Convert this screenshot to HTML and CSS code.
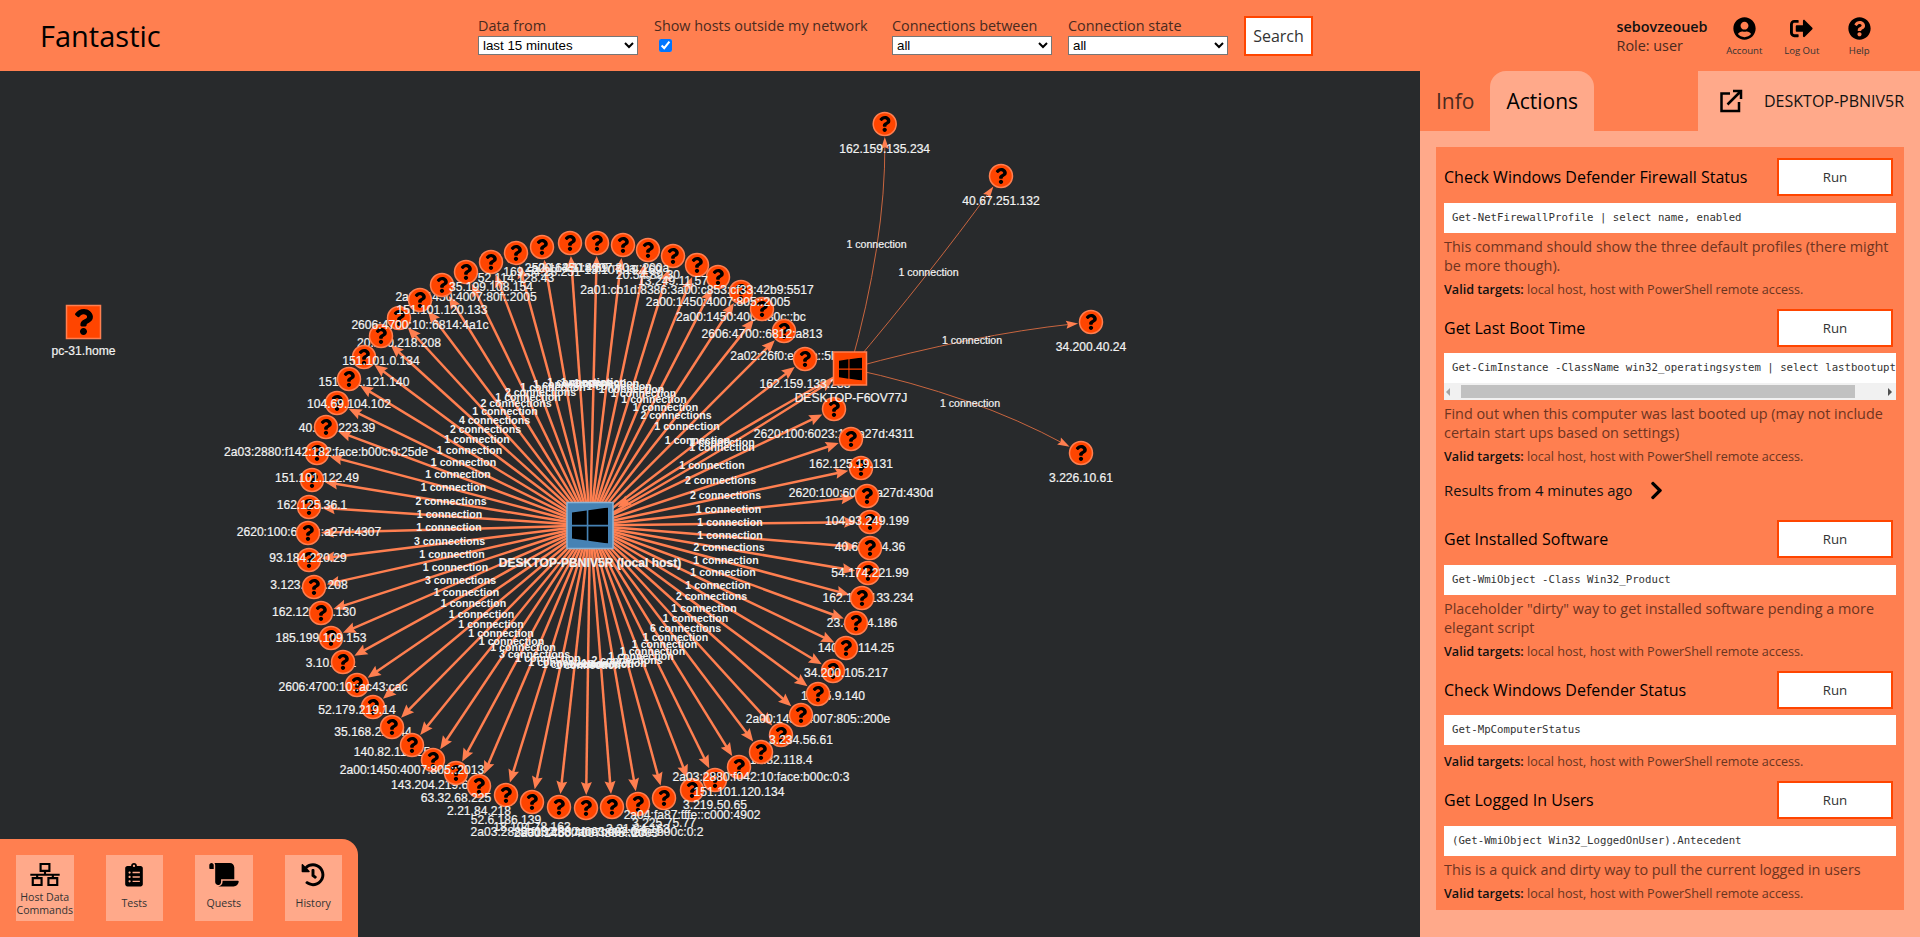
FILE: index.html
```html
<!DOCTYPE html>
<html lang="en">
<head>
<meta charset="utf-8">
<title>Fantastic</title>
<link rel="stylesheet" href="styles.css">
</head>
<body>
<svg class="defs" width="0" height="0" aria-hidden="true">
  <symbol id="q" viewBox="0 0 384 512"><path d="M202.021 0C122.202 0 70.503 32.703 29.914 91.026c-7.363 10.58-5.093 25.086 5.178 32.874l43.138 32.709c10.373 7.865 25.132 6.026 33.253-4.148 25.049-31.381 43.63-49.449 82.757-49.449 30.764 0 68.816 19.799 68.816 49.631 0 22.552-18.617 34.134-48.993 51.164-35.423 19.86-82.299 44.576-82.299 106.405V320c0 13.255 10.745 24 24 24h72.471c13.255 0 24-10.745 24-24v-5.773c0-42.86 125.268-44.645 125.268-160.627C377.504 66.256 286.902 0 202.021 0zM192 373.459c-38.196 0-69.271 31.075-69.271 69.271 0 38.195 31.075 69.27 69.271 69.27s69.271-31.075 69.271-69.271-31.075-69.27-69.271-69.27z"/></symbol>
  <symbol id="win" viewBox="0 32 448 448"><path d="M0 93.7l183.6-25.3v177.4H0V93.7zm0 324.6l183.6 25.3V268.4H0v149.9zm203.8 28L448 480V268.4H203.8v177.9zm0-380.6v180.1H448V32L203.8 65.7z"/></symbol>
</svg>

<header class="topbar">
  <div class="brand">Fantastic</div>
  <form class="filters">
    <label class="filter filter-select">Data from
      <select><option>last 15 minutes</option></select>
    </label>
    <label class="filter filter-check">Show hosts outside my network
      <input type="checkbox" checked>
    </label>
    <label class="filter filter-select">Connections between
      <select><option>all</option></select>
    </label>
    <label class="filter filter-select">Connection state
      <select><option>all</option></select>
    </label>
    <button type="button" class="search">Search</button>
  </form>
  <div class="user">
    <div class="user-info"><strong>sebovzeoueb</strong><span>Role: user</span></div>
    <a class="top-action">
      <svg viewBox="0 0 496 512"><path d="M248 8C111 8 0 119 0 256s111 248 248 248 248-111 248-248S385 8 248 8zm0 96c48.6 0 88 39.4 88 88s-39.4 88-88 88-88-39.4-88-88 39.4-88 88-88zm0 344c-58.7 0-111.3-26.6-146.5-68.2 18.8-35.4 55.6-59.8 98.5-59.8 2.4 0 4.8.4 7.1 1.1 13 4.2 26.6 6.9 40.9 6.9 14.3 0 28-2.7 40.9-6.9 2.3-.7 4.7-1.1 7.1-1.1 42.9 0 79.7 24.4 98.5 59.8C359.3 421.4 306.7 448 248 448z"/></svg>
      <span>Account</span>
    </a>
    <a class="top-action">
      <svg viewBox="0 0 512 512"><path d="M497 273L329 441c-15 15-41 4.5-41-17v-96H152c-13.3 0-24-10.7-24-24v-96c0-13.3 10.7-24 24-24h136V88c0-21.4 25.9-32 41-17l168 168c9.3 9.4 9.3 24.6 0 34zM192 436v-40c0-6.6-5.4-12-12-12H96c-17.7 0-32-14.3-32-32V160c0-17.7 14.3-32 32-32h84c6.6 0 12-5.4 12-12V76c0-6.6-5.4-12-12-12H96c-53 0-96 43-96 96v192c0 53 43 96 96 96h84c6.6 0 12-5.4 12-12z"/></svg>
      <span>Log Out</span>
    </a>
    <a class="top-action">
      <svg viewBox="0 0 512 512"><path d="M504 256c0 136.997-111.043 248-248 248S8 392.997 8 256C8 119.083 119.043 8 256 8s248 111.083 248 248zM262.655 90c-54.497 0-89.255 22.957-116.549 63.758-3.536 5.286-2.353 12.415 2.715 16.258l34.699 26.31c5.205 3.947 12.621 3.008 16.665-2.122 17.864-22.658 30.113-35.797 57.303-35.797 20.429 0 45.698 13.148 45.698 32.958 0 14.976-12.363 22.667-32.534 33.976C247.128 238.528 216 254.941 216 296v4c0 6.627 5.373 12 12 12h56c6.627 0 12-5.373 12-12v-1.333c0-28.462 83.186-29.647 83.186-106.667 0-58.002-60.165-102-116.531-102zM256 338c-25.365 0-46 20.635-46 46 0 25.364 20.635 46 46 46s46-20.636 46-46c0-25.365-20.635-46-46-46z"/></svg>
      <span>Help</span>
    </a>
  </div>
</header>

<main class="workspace">
  <section class="graph">
    <svg id="network" class="network" viewBox="0 71 1420 866" width="1420" height="866"></svg>
    <nav class="toolbox">
      <a class="tool">
        <svg viewBox="0 0 30 24" class="tool-icon line-icon"><path d="M10.5 1h9v7h-9zM0 12h30M15 8v4M7 12v3.500M23 12v3.500M2.500 15.500h9v7h-9zM18.500 15.500h9v7h-9z"/></svg>
        <span>Host Data Commands</span>
      </a>
      <a class="tool">
        <svg viewBox="0 0 384 512" class="tool-icon"><path d="M336 64h-80c0-35.3-28.7-64-64-64s-64 28.700-64 64H48C21.500 64 0 85.500 0 112v352c0 26.500 21.500 48 48 48h288c26.500 0 48-21.500 48-48V112c0-26.500-21.500-48-48-48zM96 424c-13.300 0-24-10.700-24-24s10.700-24 24-24 24 10.700 24 24-10.700 24-24 24zm0-96c-13.300 0-24-10.700-24-24s10.700-24 24-24 24 10.700 24 24-10.700 24-24 24zm0-96c-13.300 0-24-10.700-24-24s10.700-24 24-24 24 10.700 24 24-10.700 24-24 24zm96-192c13.300 0 24 10.700 24 24s-10.700 24-24 24-24-10.700-24-24 10.700-24 24-24zm128 368c0 4.400-3.600 8-8 8H168c-4.400 0-8-3.600-8-8v-16c0-4.400 3.600-8 8-8h144c4.400 0 8 3.600 8 8v16zm0-96c0 4.400-3.600 8-8 8H168c-4.400 0-8-3.600-8-8v-16c0-4.400 3.600-8 8-8h144c4.400 0 8 3.600 8 8v16zm0-96c0 4.400-3.600 8-8 8H168c-4.400 0-8-3.600-8-8v-16c0-4.400 3.600-8 8-8h144c4.400 0 8 3.600 8 8v16z"/></svg>
        <span>Tests</span>
      </a>
      <a class="tool">
        <svg viewBox="0 0 640 512" class="tool-icon"><path d="M48 0C21.530 0 0 21.530 0 48v64c0 8.840 7.160 16 16 16h80V48C96 21.530 74.470 0 48 0zm208 412.570V352h288V96c0-52.940-43.060-96-96-96H111.590C121.740 13.410 128 29.920 128 48v368c0 38.870 34.650 69.650 74.750 63.120C234.220 474 256 444.460 256 412.570zM288 384v32c0 52.930-43.060 96-96 96h336c61.860 0 112-50.140 112-112 0-8.840-7.160-16-16-16H288z"/></svg>
        <span>Quests</span>
      </a>
      <a class="tool">
        <svg viewBox="0 0 512 512" class="tool-icon"><path d="M504 255.531c.253 136.640-111.180 248.372-247.820 248.468-59.015.042-113.223-20.530-155.822-54.911-11.077-8.940-11.905-25.541-1.839-35.607l11.267-11.267c8.609-8.609 22.353-9.551 31.891-1.984C173.062 425.135 212.781 440 256 440c101.705 0 184-82.311 184-184 0-101.705-82.311-184-184-184-48.814 0-93.149 18.969-126.068 49.932l50.754 50.754c10.080 10.080 2.941 27.314-11.313 27.314H24c-8.837 0-16-7.163-16-16V38.627c0-14.254 17.234-21.393 27.314-11.314l49.372 49.372C129.209 34.136 189.552 8 256 8c136.810 0 247.747 110.780 248 247.531zm-180.912 78.784l9.823-12.630c8.138-10.463 6.253-25.542-4.210-33.679L288 256.349V152c0-13.255-10.745-24-24-24h-16c-13.255 0-24 10.745-24 24v135.651l65.409 50.874c10.463 8.137 25.541 6.253 33.679-4.210z"/></svg>
        <span>History</span>
      </a>
    </nav>
  </section>

  <aside class="side">
    <div class="side-head">
      <a class="tab">Info</a>
      <a class="tab tab-active">Actions</a>
      <div class="host-head">
        <svg viewBox="0 0 24 24" class="line-icon open-icon"><path d="M11 4.500H2.500v17.500h17.500v-9M8.500 15.500L21.500 2.500M14 2h8v8"/></svg>
        <span>DESKTOP-PBNIV5R</span>
      </div>
    </div>
    <div class="side-body">
      <div class="actions">
        <article class="action">
          <div class="action-row"><h3>Check Windows Defender Firewall Status</h3><button type="button" class="run">Run</button></div>
          <div class="code">Get-NetFirewallProfile | select name, enabled</div>
          <p class="desc">This command should show the three default profiles (there might be more though).</p>
          <p class="valid"><b>Valid targets:</b> local host, host with PowerShell remote access.</p>
        </article>
        <article class="action">
          <div class="action-row"><h3>Get Last Boot Time</h3><button type="button" class="run">Run</button></div>
          <div class="code code-scroll"><div class="code-line">Get-CimInstance -ClassName win32_operatingsystem | select lastbootuptime</div><div class="scrollbar"><i class="arrow-left"></i><i class="thumb"></i><i class="arrow-right"></i></div></div>
          <p class="desc">Find out when this computer was last booted up (may not include certain start ups based on settings)</p>
          <p class="valid"><b>Valid targets:</b> local host, host with PowerShell remote access.</p>
          <div class="results"><span>Results from 4 minutes ago</span>
            <svg viewBox="0 0 320 512"><path d="M285.476 272.971L91.132 467.314c-9.373 9.373-24.569 9.373-33.941 0l-22.667-22.667c-9.357-9.357-9.375-24.522-.04-33.901L188.505 256 34.484 101.255c-9.335-9.379-9.317-24.544.04-33.901l22.667-22.667c9.373-9.373 24.569-9.373 33.941 0L285.475 239.030c9.373 9.372 9.373 24.568.001 33.941z"/></svg>
          </div>
        </article>
        <article class="action">
          <div class="action-row"><h3>Get Installed Software</h3><button type="button" class="run">Run</button></div>
          <div class="code">Get-WmiObject -Class Win32_Product</div>
          <p class="desc">Placeholder "dirty" way to get installed software pending a more elegant script</p>
          <p class="valid"><b>Valid targets:</b> local host, host with PowerShell remote access.</p>
        </article>
        <article class="action">
          <div class="action-row"><h3>Check Windows Defender Status</h3><button type="button" class="run">Run</button></div>
          <div class="code">Get-MpComputerStatus</div>
          <p class="valid"><b>Valid targets:</b> local host, host with PowerShell remote access.</p>
        </article>
        <article class="action">
          <div class="action-row"><h3>Get Logged In Users</h3><button type="button" class="run">Run</button></div>
          <div class="code">(Get-WmiObject Win32_LoggedOnUser).Antecedent</div>
          <p class="desc">This is a quick and dirty way to pull the current logged in users</p>
          <p class="valid"><b>Valid targets:</b> local host, host with PowerShell remote access.</p>
        </article>
      </div>
    </div>
  </aside>
</main>
<script src="graph.js"></script>
</body>
</html>
```

FILE: styles.css
```css
* { box-sizing: border-box; }
html, body { height: 100%; }
body {
  margin: 0;
  overflow: hidden;
  display: flex;
  flex-direction: column;
  font-family: "Open Sans", "Liberation Sans", sans-serif;
  color: #212529;
  background: #282a2c;
}
.defs { position: absolute; }

/* top bar */
.topbar {
  height: 71px;
  flex: none;
  display: flex;
  background: #ff7f50;
}
.brand {
  width: 478px;
  padding: 17px 0 0 40px;
  font-size: 29px;
  font-weight: 500;
  line-height: 38px;
  color: #000;
}
.filters {
  display: flex;
  align-items: flex-start;
  padding-top: 16px;
  column-gap: 16.5px;
}
.filter {
  display: flex;
  flex-direction: column;
  align-items: flex-start;
  font-size: 14.400px;
  line-height: 20px;
  color: #4a2a1e;
}
.filter-select { width: 159.5px; }
.filter-check { width: 221.5px; }
.filter select {
  width: 100%;
  height: 19px;
  font: 13.33px "Liberation Sans", sans-serif;
  background: #fff;
  color: #000;
}
.filter input { margin: 3px 3px 3px 5px; width: 13px; height: 13px; }
.search {
  width: 69px;
  height: 40px;
  margin: 0;
  background: #fff;
  border: 2px solid #ff4500;
  font: 16px "Open Sans", sans-serif;
  color: #333;
}
.user {
  margin-left: auto;
  display: flex;
  align-items: flex-start;
  padding: 17px 32px 0 0;
}
.user-info {
  display: flex;
  flex-direction: column;
  width: 99px;
  font-size: 14.400px;
  line-height: 19px;
  color: #4a2a1e;
}
.user-info strong { font-weight: 600; color: #111; }
.top-action {
  width: 57.500px;
  display: flex;
  flex-direction: column;
  align-items: center;
  font-size: 9.600px;
  line-height: 13px;
  color: #333;
}
.top-action svg { width: 23px; height: 23px; margin-bottom: 4px; fill: #000; }

/* graph */
.workspace { flex: 1; display: flex; min-height: 0; }
.graph {
  position: relative;
  width: 1420px;
  flex: none;
  background: #282a2c;
  overflow: hidden;
}
.network { display: block; font-family: "Liberation Sans", Arial, sans-serif; }
.edge { fill: none; stroke: #ff7f50; stroke-width: 2.500px; }
.edge-thin { stroke: #c8653f; stroke-width: 1px; }
.arrow { fill: #ff7f50; }
.edge-label { font-size: 10.600px; font-weight: 700; fill: #f2f2f2; text-anchor: middle; dominant-baseline: central; }
.edge-label-thin { font-weight: 400; stroke: #f2f2f2; stroke-width: .2px; }
.node-label { font-size: 12.100px; fill: #f2f2f2; stroke: #f2f2f2; stroke-width: .2px; text-anchor: middle; dominant-baseline: central; }
.node-label-hub { font-weight: 700; }
.node-shape { fill: #ff4500; stroke: #ff7f50; stroke-width: 1.500px; }
.hub-shape { fill: #4682b4; stroke: #8db2d2; stroke-width: 1.500px; }
.glyph { fill: #000; }

.toolbox {
  position: absolute;
  left: 0;
  bottom: 0;
  width: 358px;
  height: 98px;
  padding: 16px;
  display: flex;
  justify-content: space-between;
  background: #ff7f50;
  border-top-right-radius: 16px;
}
.tool {
  width: 57.500px;
  height: 66px;
  padding-top: 8px;
  display: flex;
  flex-direction: column;
  align-items: center;
  background: #ffa98a;
  font-size: 10.600px;
  line-height: 13px;
  text-align: center;
  color: #333;
}
.tool span { flex: 1; display: flex; align-items: center; }
.tool-icon { height: 23.500px; width: 30px; flex: none; fill: #000; }
.line-icon { fill: none; stroke: #000; stroke-width: 2.200px; }

/* side panel */
.side { width: 500px; flex: none; display: flex; flex-direction: column; background: #ffa98a; }
.side-head { height: 60px; flex: none; display: flex; background: #ff7f50; }
.tab {
  height: 60px;
  padding: 0 16px;
  font-size: 21px;
  line-height: 60px;
  color: #4a2a1e;
}
.tab-active { background: #ffa98a; border-radius: 16px 16px 0 0; color: #000; }
.host-head {
  margin-left: auto;
  width: 222px;
  display: flex;
  align-items: center;
  column-gap: 21px;
  padding-left: 21px;
  background: #ffa98a;
  font-size: 16px;
  font-weight: 500;
  color: #111;
}
.open-icon { width: 24px; height: 24px; stroke-width: 2.500px; }
.side-body { padding: 16px; flex: 1; }
.actions { background: #ff7f50; padding: 11.300px 8px 8px; }
.action-row { display: flex; justify-content: space-between; align-items: center; padding-right: 3px; }
.action-row h3 { margin: 0; font-size: 16px; font-weight: 500; color: #000; }
.run {
  width: 116px;
  height: 38px;
  background: #fff;
  border: 2px solid #ff4500;
  font: 13.300px "Open Sans", sans-serif;
  color: #333;
}
.code {
  margin-top: 6.500px;
  background: #fff;
  font-family: "DejaVu Sans Mono", monospace;
  font-size: 10.700px;
  line-height: 30px;
  padding: 0 8px;
  color: #333;
  white-space: pre;
  overflow: hidden;
}
.code-scroll { padding: 0; }
.code-line { padding: 0 8px; height: 30px; overflow: hidden; }
.scrollbar {
  height: 17px;
  background: #f1f1f1;
  position: relative;
}
.thumb { position: absolute; left: 17px; width: 394px; top: 2px; bottom: 2px; background: #c1c1c1; }
.arrow-left, .arrow-right { position: absolute; top: 4.500px; width: 0; height: 0; border: 4px solid transparent; }
.arrow-left { left: 2px; border-right-color: #a3a3a3; border-left-width: 0; }
.arrow-right { right: 4px; border-left-color: #505050; border-right-width: 0; }
.desc {
  margin: 4px 0 0;
  font-size: 14.400px;
  line-height: 19px;
  color: #6e3420;
}
.valid {
  margin: 7px 0 11px;
  font-size: 12.600px;
  line-height: 16px;
  color: #6a3520;
}
.code + .valid { margin: 9px 0 11px; }
.action:last-child .valid { margin-bottom: 0; }
.valid b { font-weight: 600; color: #111; }
.results {
  display: flex;
  align-items: center;
  column-gap: 18px;
  margin: 0 0 19px;
  padding-top: 3px;
  height: 25px;
  font-size: 14.800px;
  color: #111;
}
.results svg { width: 13px; height: 21px; fill: #000; }
```

FILE: graph.js
```js
// Host map: [x, y, label, connections to local host, label hidden behind neighbouring nodes]
var HUB = { x: 590, y: 525.5 };
var NODES = [
  [309, 507, "2620:100:6021::a27d:4307", 1, 1],
  [312, 480, "162.125.36.1", 2, 0],
  [317, 453, "151.101.122.49", 1, 0],
  [326, 427, "2a03:2880:f142:182:face:b00c:0:25de", 1, 0],
  [337, 403, "40.114.223.39", 1, 1],
  [349, 379, "104.69.104.102", 1, 0],
  [364, 357, "151.101.121.140", 1, 1],
  [381, 336, "151.101.0.134", 2, 0],
  [399, 318, "20.190.218.208", 4, 1],
  [420, 300, "2606:4700:10::6814:4a1c", 1, 0],
  [442, 285, "151.101.120.133", 2, 0],
  [466, 272, "2a00:1450:4007:80f::2005", 1, 1],
  [491, 262, "35.199.108.154", 2, 0],
  [516, 253, "52.114.128.43", 1, 0],
  [542, 247, "169.54.28.251", 1, 0],
  [570, 243, "52.163.118.69", 1, 0],
  [597, 243, "2a00:1450:4007:80a::200a", 1, 0],
  [623, 245, "13.107.19.169", 1, 0],
  [648, 250, "20.54.89.30", 1, 0],
  [673, 256, "13.249.11.57", 1, 0],
  [697, 265, "2a01:cb1d:8386:3a00:c853:cf33:42b9:5517", 1, 0],
  [718, 277, "2a00:1450:4007:805::2005", 1, 0],
  [741, 292, "2a00:1450:4007:80c::bc", 1, 1],
  [762, 309, "2606:4700::6812:a813", 2, 0],
  [784, 331, "2a02:26f0:e3:1a::5b", 1, 1],
  [805, 359, "162.159.133.233", 1, 1],
  [834, 409, "2620:100:6023:13::a27d:4311", 1, 1],
  [851, 439, "162.125.19.131", 2, 0],
  [861, 468, "2620:100:6021::a27d:430d", 2, 1],
  [867, 496, "104.93.249.199", 1, 0],
  [870, 522, "40.67.254.36", 1, 1],
  [870, 548, "54.174.221.99", 1, 0],
  [868, 573, "162.125.133.234", 2, 1],
  [862, 598, "23.40.64.186", 1, 1],
  [856, 623, "140.82.114.25", 1, 1],
  [846, 648, "34.200.105.217", 1, 0],
  [833, 671, "13.35.9.140", 2, 1],
  [818, 694, "2a00:1450:4007:805::200e", 1, 1],
  [801, 715, "3.234.56.61", 1, 0],
  [781, 735, "18.82.118.4", 6, 1],
  [761, 752, "2a03:2880:f042:10:face:b00c:0:3", 1, 0],
  [739, 767, "151.101.120.134", 1, 0],
  [715, 780, "3.219.50.65", 1, 0],
  [692, 790, "2a04:fa87:fffe::c000:4902", 1, 0],
  [664, 798, "3.225.75.77", 2, 0],
  [638, 804, "2.21.84.163", 1, 0],
  [612, 807, "2a03:2880:f003:c07:face:b00c:0:2", 1, 0],
  [586, 808, "2a00:1450:4007:805::2003", 1, 0],
  [559, 807, "2a03:2880:f102:83:face:b00c:0:3", 1, 0],
  [532, 802, "18.104.78.163", 1, 0],
  [506, 795, "52.6.186.139", 1, 0],
  [479, 786, "2.21.84.218", 3, 0],
  [456, 773, "63.32.68.225", 1, 0],
  [433, 760, "143.204.219.61", 1, 1],
  [412, 745, "2a00:1450:4007:805::2013", 1, 0],
  [392, 727, "140.82.114.25", 1, 1],
  [373, 707, "35.168.217.44", 1, 1],
  [357, 685, "52.179.219.14", 1, 0],
  [343, 662, "2606:4700:10::ac43:cac", 1, 0],
  [331, 638, "3.10.90.1", 3, 1],
  [321, 613, "185.199.109.153", 1, 0],
  [314, 587, "162.125.80.130", 1, 1],
  [309, 560, "3.123.217.208", 3, 1],
  [308, 533, "93.184.220.29", 1, 0]
];
// Remote hosts reached from the second desktop: x, y, label, curve mid-point
var F6 = { x: 850, y: 368.5 };
var OUTER = [
  [884.7, 124, "162.159.135.234", 876.5, 244],
  [1001, 176, "40.67.251.132", 928.5, 272],
  [1091, 322, "34.200.40.24", 972, 340],
  [1081, 453, "3.226.10.61", 970, 403]
];

var NS = "http://www.w3.org/2000/svg";
var svg = document.getElementById("network");
var layers = {};
["edges", "edgeLabels", "backLabels", "nodes", "frontLabels"].forEach(function (n) {
  layers[n] = svg.appendChild(document.createElementNS(NS, "g"));
});
function el(parent, tag, attrs, text) {
  var e = document.createElementNS(NS, tag);
  for (var k in attrs) e.setAttribute(k, attrs[k]);
  if (text) e.textContent = text;
  parent.appendChild(e);
  return e;
}
function arrow(tipX, tipY, dx, dy, len, wid) {
  var bx = tipX - dx * len, by = tipY - dy * len;
  var ix = tipX - dx * len * 0.85, iy = tipY - dy * len * 0.85;
  var px = -dy * wid / 2, py = dx * wid / 2;
  el(layers.edges, "polygon", {
    "class": "arrow",
    points: [tipX, tipY, bx + px, by + py, ix, iy, bx - px, by - py].map(function (v) { return v.toFixed(1); }).join(" ")
  });
}
function curve(s, e, m, r, thin) {
  // quadratic curve through (m.x, m.y); arrow ends r px before e
  var cx = 2 * m.x - (s.x + e.x) / 2, cy = 2 * m.y - (s.y + e.y) / 2;
  var dx = e.x - cx, dy = e.y - cy, d = Math.hypot(dx, dy);
  dx /= d; dy /= d;
  var tx = e.x - dx * r, ty = e.y - dy * r;
  el(layers.edges, "path", {
    "class": thin ? "edge edge-thin" : "edge",
    d: "M" + s.x + " " + s.y + "Q" + cx + " " + cy + " " + (tx - dx * 6) + " " + (ty - dy * 6)
  });
  arrow(tx, ty, dx, dy, thin ? 12 : 13, thin ? 8 : 11);
}
function circleNode(x, y, label, behind) {
  el(layers.nodes, "circle", { "class": "node-shape", cx: x, cy: y, r: 11.5 });
  el(layers.nodes, "use", { "class": "glyph", href: "#q", x: x - 6, y: y - 8, width: 12, height: 16 });
  el(behind ? layers.backLabels : layers.frontLabels, "text", { "class": "node-label", x: x, y: y + 25 }, label);
}
function connLabel(n) { return n + (n === 1 ? " connection" : " connections"); }

NODES.forEach(function (n) {
  var dx = n[0] - HUB.x, dy = n[1] - HUB.y, d = Math.hypot(dx, dy);
  dx /= d; dy /= d;
  var tx = n[0] - dx * 13, ty = n[1] - dy * 13;
  el(layers.edges, "line", { "class": "edge", x1: HUB.x, y1: HUB.y, x2: tx - dx * 6, y2: ty - dy * 6 });
  arrow(tx, ty, dx, dy, 13, 11);
  el(layers.edgeLabels, "text", {
    "class": "edge-label",
    x: (n[0] + HUB.x) / 2,
    y: (n[1] + HUB.y) / 2 - 2
  }, connLabel(n[3]));
  circleNode(n[0], n[1], n[2], n[4]);
});

// The two links between the local host and the second desktop
curve(F6, HUB, { x: 722, y: 442 }, 33, false);
curve(HUB, F6, { x: 722, y: 449 }, 20, false);
el(layers.edgeLabels, "text", { "class": "edge-label", x: 722, y: 442 }, connLabel(1));
el(layers.edgeLabels, "text", { "class": "edge-label", x: 722, y: 447 }, connLabel(1));

OUTER.forEach(function (n) {
  curve(F6, { x: n[0], y: n[1] }, { x: n[3], y: n[4] }, 13, true);
  el(layers.edgeLabels, "text", { "class": "edge-label edge-label-thin", x: n[3], y: n[4] }, connLabel(1));
  circleNode(n[0], n[1], n[2], 0);
});

// Square nodes
el(layers.nodes, "rect", { "class": "node-shape", x: 833.5, y: 352, width: 33, height: 33 });
el(layers.nodes, "use", { "class": "glyph", href: "#win", x: 839, y: 357.5, width: 23, height: 23 });
el(layers.frontLabels, "text", { "class": "node-label", x: 851, y: 398 }, "DESKTOP-F6OV77J");

el(layers.nodes, "rect", { "class": "node-shape", x: 66.5, y: 305.5, width: 34, height: 33 });
el(layers.nodes, "use", { "class": "glyph", href: "#q", x: 73.5, y: 309, width: 20, height: 26 });
el(layers.frontLabels, "text", { "class": "node-label", x: 83.5, y: 351 }, "pc-31.home");

el(layers.nodes, "rect", { "class": "hub-shape", x: 567, y: 502.5, width: 46, height: 46 });
el(layers.nodes, "use", { "class": "glyph", href: "#win", x: 572, y: 507.5, width: 36, height: 36 });
el(layers.frontLabels, "text", { "class": "node-label node-label-hub", x: 590, y: 563 }, "DESKTOP-PBNIV5R (local host)");
```
